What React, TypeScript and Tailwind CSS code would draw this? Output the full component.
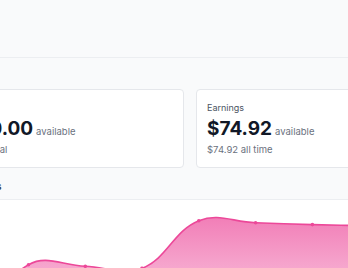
import React from "react";

type P = { x: number; y: number };

const TOP = 198;
const pts: P[] = [
  { x: -28.3, y: 330 },
  { x: 28.5, y: 262.7 },
  { x: 85.3, y: 264.3 },
  { x: 142, y: 266.4 },
  { x: 198.8, y: 218.7 },
  { x: 255.6, y: 220.7 },
  { x: 312.4, y: 222.6 },
  { x: 369.2, y: 223.8 },
  { x: 426, y: 224.5 },
].map((p) => ({ x: p.x, y: p.y - TOP }));

function ctrl(prev: P, cur: P, next: P, t: number) {
  const d01 = Math.hypot(cur.x - prev.x, cur.y - prev.y);
  const d12 = Math.hypot(next.x - cur.x, next.y - cur.y);
  const s01 = d01 / (d01 + d12);
  const s12 = d12 / (d01 + d12);
  const fa = t * s01;
  const fb = t * s12;
  return {
    prev: { x: cur.x - fa * (next.x - prev.x), y: cur.y - fa * (next.y - prev.y) },
    next: { x: cur.x + fb * (next.x - prev.x), y: cur.y + fb * (next.y - prev.y) },
  };
}

function buildPath(points: P[]) {
  const cps = points.map((p, i) => {
    const prev = points[i - 1] ?? p;
    const next = points[i + 1] ?? p;
    return ctrl(prev, p, next, 0.4);
  });
  let d = `M ${points[0].x} ${points[0].y}`;
  for (let i = 1; i < points.length; i++) {
    const a = cps[i - 1].next;
    const b = cps[i].prev;
    d += ` C ${a.x} ${a.y} ${b.x} ${b.y} ${points[i].x} ${points[i].y}`;
  }
  return d;
}

function Chart() {
  const line = buildPath(pts);
  const area = `${line} L ${pts[pts.length - 1].x} 200 L ${pts[0].x} 200 Z`;
  return (
    <svg width={348} height={70} className="block">
      <defs>
        <linearGradient id="g" x1="0" y1="0" x2="0" y2="110" gradientUnits="userSpaceOnUse">
          <stop offset="0" stopColor="#ec4899" stopOpacity="0.78" />
          <stop offset="1" stopColor="#ec4899" stopOpacity="0.3" />
        </linearGradient>
      </defs>
      <path d={area} fill="url(#g)" />
      <path d={line} fill="none" stroke="#ec4899" strokeWidth={1.6} />
      {pts.map((p, i) => (
        <circle key={i} cx={p.x} cy={p.y} r={1.8} fill="#ec4899" />
      ))}
    </svg>
  );
}

function Card({ label, amount, sub }: { label: string; amount: string; sub: string }) {
  return (
    <div className="w-[218px] shrink-0 rounded-[4px] border border-[#e5e7eb] bg-white pl-[10px] pt-[12px] pb-[11px]">
      <div className="text-[9px] leading-[12px] text-[#4b5563]">{label}</div>
      <div className="mt-[3px] flex items-baseline gap-[3px]">
        <span className="text-[19px] font-bold leading-[24px] text-[#111827]">{amount}</span>
        <span className="text-[9.5px] text-[#6b7280]">available</span>
      </div>
      <div className="mt-[3px] text-[9.5px] leading-[12px] text-[#6b7280]">{sub}</div>
    </div>
  );
}

export default function App() {
  return (
    <div className="h-[268px] w-[348px] overflow-hidden bg-[#f9fafb] font-['Inter',sans-serif]">
      <div className="h-[58px] border-b border-[#eceef1]" />
      <div className="ml-[-34px] w-[480px]">
        <h2 className="ml-[-5px] pt-[11px] text-[10px] font-semibold leading-[13px] text-[#374151]">Payouts</h2>
        <div className="mt-[7px] flex gap-[12px]">
          <Card label="Paid" amount="$0.00" sub="In total" />
          <Card label="Earnings" amount="$74.92" sub="$74.92 all time" />
        </div>
        <h2 className="ml-[-7px] pt-[12px] pb-[6px] text-[10px] font-semibold leading-[13px] text-[#374151]">Earnings</h2>
      </div>
      <div className="border-t border-[#eceef1] bg-white">
        <Chart />
      </div>
    </div>
  );
}
